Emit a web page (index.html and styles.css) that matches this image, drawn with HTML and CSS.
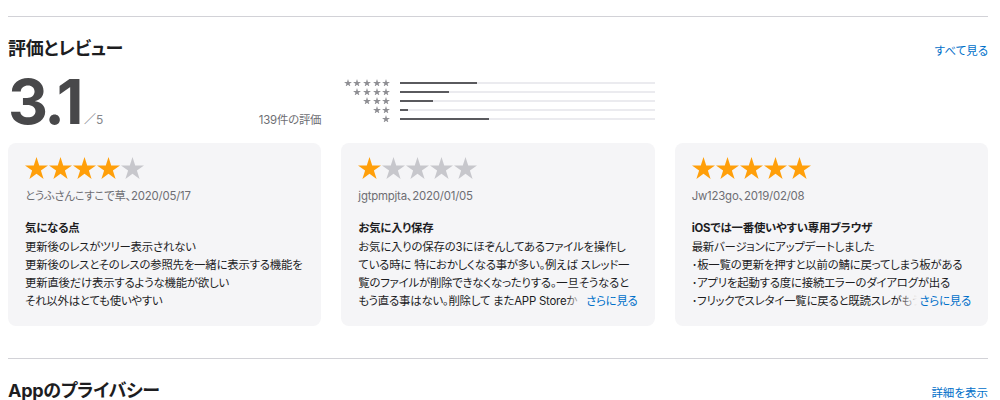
FILE: index.html
```html
<!DOCTYPE html>
<html lang="ja">
<head>
<meta charset="utf-8">
<title>評価とレビュー</title>
<link rel="stylesheet" href="styles.css">
</head>
<body>
<svg class="defs" width="0" height="0" aria-hidden="true">
  <symbol id="star" viewBox="2.45 0 95.1 90.45">
    <polygon points="50,0 61.23,34.55 97.55,34.55 68.17,55.9 79.39,90.45 50,69.1 20.61,90.45 31.83,55.9 2.45,34.55 38.77,34.55"/>
  </symbol>
</svg>
<div class="page">
  <div class="divider"></div>
  <section class="section">
    <div class="section-head">
      <h2 class="section-title">評価とレビュー</h2>
      <a class="link" href="#">すべて見る</a>
    </div>

    <div class="summary">
      <div class="score">
        <span class="score-num">3.1</span>
        <span class="score-max">／5</span>
        <span class="score-count">139件の評価</span>
      </div>
      <div class="histogram">
        <div class="hist-row">
          <div class="hist-stars"><svg class="hs"><use href="#star"/></svg><svg class="hs"><use href="#star"/></svg><svg class="hs"><use href="#star"/></svg><svg class="hs"><use href="#star"/></svg><svg class="hs"><use href="#star"/></svg></div>
          <div class="bar"><div class="bar-fill" style="width:30%"></div></div>
        </div>
        <div class="hist-row">
          <div class="hist-stars"><svg class="hs"><use href="#star"/></svg><svg class="hs"><use href="#star"/></svg><svg class="hs"><use href="#star"/></svg><svg class="hs"><use href="#star"/></svg></div>
          <div class="bar"><div class="bar-fill" style="width:19%"></div></div>
        </div>
        <div class="hist-row">
          <div class="hist-stars"><svg class="hs"><use href="#star"/></svg><svg class="hs"><use href="#star"/></svg><svg class="hs"><use href="#star"/></svg></div>
          <div class="bar"><div class="bar-fill" style="width:13%"></div></div>
        </div>
        <div class="hist-row">
          <div class="hist-stars"><svg class="hs"><use href="#star"/></svg><svg class="hs"><use href="#star"/></svg></div>
          <div class="bar"><div class="bar-fill" style="width:3%"></div></div>
        </div>
        <div class="hist-row">
          <div class="hist-stars"><svg class="hs"><use href="#star"/></svg></div>
          <div class="bar"><div class="bar-fill" style="width:35%"></div></div>
        </div>
      </div>
    </div>

    <div class="reviews">
      <article class="card">
        <div class="stars">
          <svg class="s on"><use href="#star"/></svg><svg class="s on"><use href="#star"/></svg><svg class="s on"><use href="#star"/></svg><svg class="s on"><use href="#star"/></svg><svg class="s off"><use href="#star"/></svg>
        </div>
        <div class="author">とうふさんこすこで草、2020/05/17</div>
        <h3 class="title">気になる点</h3>
        <div class="body">
          <div class="text">更新後のレスがツリー表示されない<br>更新後のレスとそのレスの参照先を一緒に表示する機能を<br>更新直後だけ表示するような機能が欲しい<br>それ以外はとても使いやすい</div>
        </div>
      </article>

      <article class="card">
        <div class="stars">
          <svg class="s on"><use href="#star"/></svg><svg class="s off"><use href="#star"/></svg><svg class="s off"><use href="#star"/></svg><svg class="s off"><use href="#star"/></svg><svg class="s off"><use href="#star"/></svg>
        </div>
        <div class="author">jgtpmpjta、2020/01/05</div>
        <h3 class="title">お気に入り保存</h3>
        <div class="body">
          <div class="text">お気に入りの保存の3にほぞんしてあるファイルを操作し<br>ている時に 特におかしくなる事が多い。例えば スレッド一<br>覧のファイルが削除できなくなったりする。一旦そうなると<br>もう直る事はない。削除して またAPP Storeか</div>
          <a class="more" href="#">さらに見る</a>
        </div>
      </article>

      <article class="card">
        <div class="stars">
          <svg class="s on"><use href="#star"/></svg><svg class="s on"><use href="#star"/></svg><svg class="s on"><use href="#star"/></svg><svg class="s on"><use href="#star"/></svg><svg class="s on"><use href="#star"/></svg>
        </div>
        <div class="author">Jw123go、2019/02/08</div>
        <h3 class="title">iOSでは一番使いやすい専用ブラウザ</h3>
        <div class="body">
          <div class="text">最新バージョンにアップデートしました<br>･板一覧の更新を押すと以前の鯖に戻ってしまう板がある<br>･アプリを起動する度に接続エラーのダイアログが出る<br>･フリックでスレタイ一覧に戻ると既読スレがもう</div>
          <a class="more" href="#">さらに見る</a>
        </div>
      </article>
    </div>
  </section>

  <div class="divider divider-2"></div>
  <section class="section">
    <div class="section-head">
      <h2 class="section-title">Appのプライバシー</h2>
      <a class="link" href="#">詳細を表示</a>
    </div>
  </section>
</div>
</body>
</html>
```

FILE: styles.css
```css
html, body {
  margin: 0;
  padding: 0;
  background: #fff;
}
body {
  font-family: Inter, "Noto Sans CJK JP", sans-serif;
  font-feature-settings: "palt";
  color: #1d1d1f;
  overflow: hidden;
}
.defs {
  position: absolute;
  width: 0;
  height: 0;
}
.page {
  padding: 0 12px 0 8px;
}
.divider {
  margin-top: 16px;
  border-top: 1px solid #d2d2d7;
}
.divider-2 {
  margin-top: 32px;
}
.section-head {
  display: flex;
  justify-content: space-between;
  align-items: baseline;
  margin-top: 20px;
}
.section-title {
  margin: 0;
  font-size: 18px;
  line-height: 24px;
  font-weight: 700;
  letter-spacing: -0.3px;
  color: #1d1d1f;
}
.link {
  font-size: 11.5px;
  line-height: 16px;
  color: #0070c9;
  text-decoration: none;
}
.summary {
  display: grid;
  grid-template-columns: repeat(3, minmax(0, 1fr));
  column-gap: 20px;
  margin-top: 10px;
}
.score {
  display: flex;
  align-items: baseline;
}
.score-num {
  font-size: 62px;
  line-height: 62px;
  font-weight: 700;
  letter-spacing: -2.5px;
  color: #48484a;
}
.score-max {
  margin-left: 3px;
  font-size: 12px;
  color: #86868b;
}
.score-count {
  margin-left: auto;
  font-size: 11.4px;
  letter-spacing: -0.2px;
  color: #6e6e73;
}
.histogram {
  padding-top: 7px;
}
.hist-row {
  display: flex;
  align-items: center;
  height: 9px;
  gap: 10px;
}
.hist-stars {
  width: 49px;
  display: flex;
  justify-content: flex-end;
  gap: 1.7px;
}
.hs {
  width: 8px;
  height: 7.6px;
  fill: #8e8e93;
}
.bar {
  flex: 1;
  height: 2px;
  background: #ebebef;
}
.bar-fill {
  height: 100%;
  background: #5a5a5e;
}
.reviews {
  display: grid;
  grid-template-columns: repeat(3, minmax(0, 1fr));
  column-gap: 20px;
  margin-top: 10px;
}
.card {
  min-width: 0;
  background: #f5f5f7;
  border-radius: 8px;
  padding: 14px 17px 16px;
}
.stars {
  display: flex;
  gap: 1px;
  height: 22px;
}
.s {
  width: 23px;
  height: 22px;
}
.s.on {
  fill: #ff9f0a;
}
.s.off {
  fill: #c7c7cc;
}
.author {
  margin-top: 8px;
  font-size: 11.4px;
  line-height: 18px;
  letter-spacing: -0.2px;
  color: #6e6e73;
}
.title {
  margin: 14px 0 0;
  font-size: 11.4px;
  line-height: 19px;
  font-weight: 700;
  letter-spacing: -0.2px;
  color: #1d1d1f;
}
.body {
  position: relative;
  height: 72px;
  overflow: hidden;
}
.text {
  font-size: 11.4px;
  line-height: 18px;
  letter-spacing: -0.2px;
  white-space: nowrap;
  color: #1d1d1f;
}
.more {
  position: absolute;
  right: 0;
  bottom: 0;
  padding-left: 20px;
  font-size: 11.4px;
  line-height: 18px;
  letter-spacing: -0.2px;
  color: #0070c9;
  text-decoration: none;
  background: linear-gradient(to right, rgba(245, 245, 247, 0) 0, #f5f5f7 18px);
}
```
